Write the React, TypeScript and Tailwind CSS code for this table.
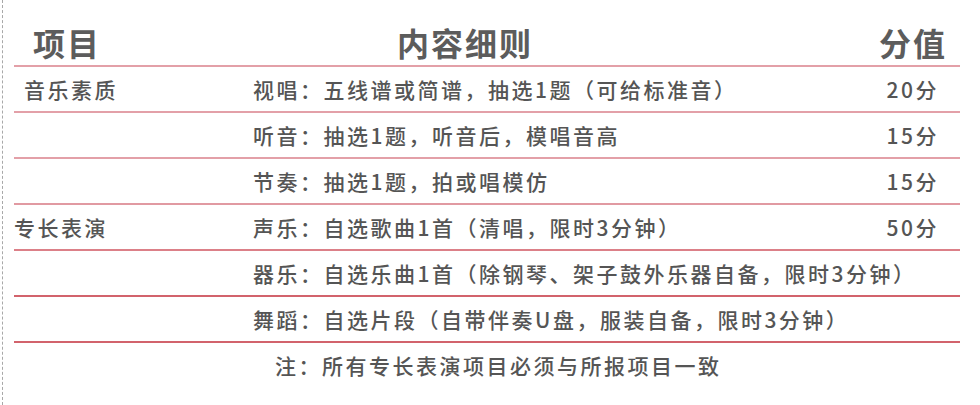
import React from 'react';

const rows = [
  { cat: '音乐素质', catPad: 'pl-[10px]', text: '视唱：五线谱或简谱，抽选1题（可给标准音）', score: '20分', line: 'border-[#e3a0a8]' },
  { cat: '', catPad: '', text: '听音：抽选1题，听音后，模唱音高', score: '15分', line: 'border-[#e3a0a8]' },
  { cat: '', catPad: '', text: '节奏：抽选1题，拍或唱模仿', score: '15分', line: 'border-[#e19aa2]' },
  { cat: '专长表演', catPad: 'pl-0', text: '声乐：自选歌曲1首（清唱，限时3分钟）', score: '50分', line: 'border-[#dc8088]' },
  { cat: '', catPad: '', text: '器乐：自选乐曲1首（除钢琴、架子鼓外乐器自备，限时3分钟）', score: '', line: 'border-[#d2636c]' },
  { cat: '', catPad: '', text: '舞蹈：自选片段（自带伴奏U盘，服装自备，限时3分钟）', score: '', line: 'border-[#d2636c]' },
];

export default function App() {
  return (
    <div className="w-[980px] h-[405px] bg-white pl-[2px] overflow-hidden">
      <div
        className="h-full border-l border-dashed border-[#a8a8a8] pl-[11px] text-[#555555]"
        style={{ fontFamily: '"Noto Sans CJK SC", "Noto Sans", sans-serif' }}
      >
        <div className="w-[946px] flex flex-col">
          {/* header */}
          <div className="h-[67px] flex items-start pt-[25px] border-b-2 border-[#e3a0a8] text-[32px] leading-[34px] font-bold tracking-[2px] text-[#5c5c5c]">
            <div className="w-[239px] pl-[19px]">项目</div>
            <div className="flex-1 pl-[144px]">内容细则</div>
            <div className="pr-[13px]">分值</div>
          </div>

          {rows.map((r, i) => (
            <div
              key={i}
              className={`h-[46px] flex items-center border-b-2 ${r.line} text-[21px] leading-none font-medium tracking-[2.5px] whitespace-nowrap`}
            >
              <div className={`w-[239px] shrink-0 ${r.catPad}`}>{r.cat}</div>
              <div className="flex-1">{r.text}</div>
              {r.score && <div className="shrink-0 pr-[21px]">{r.score}</div>}
            </div>
          ))}

          {/* note */}
          <div className="h-[44px] flex items-center pl-[261px] text-[21px] leading-none font-medium tracking-[2.5px] whitespace-nowrap">
            注：所有专长表演项目必须与所报项目一致
          </div>
        </div>
      </div>
    </div>
  );
}
